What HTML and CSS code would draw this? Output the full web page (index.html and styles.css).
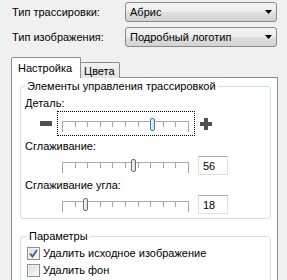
FILE: index.html
```html
<!DOCTYPE html>
<html lang="ru">
<head>
  <meta charset="UTF-8">
  <title>Трассировка</title>
  <link rel="stylesheet" href="styles.css">
</head>
<body>
  <div class="window">
    <div class="field-row">
      <span class="field-label">Тип трассировки:</span>
      <div class="combo">
        <span>Абрис</span>
        <svg class="combo-arrow" width="7" height="4" viewBox="0 0 7 4"><path d="M0 0H7L3.5 4Z" fill="#000"/></svg>
      </div>
    </div>
    <div class="field-row">
      <span class="field-label">Тип изображения:</span>
      <div class="combo">
        <span>Подробный логотип</span>
        <svg class="combo-arrow" width="7" height="4" viewBox="0 0 7 4"><path d="M0 0H7L3.5 4Z" fill="#000"/></svg>
      </div>
    </div>

    <div class="tabs">
      <div class="tab-strip">
        <div class="tab active">Настройка</div>
        <div class="tab">Цвета</div>
      </div>
      <div class="tab-panel">
        <fieldset class="group">
          <legend>Элементы управления трассировкой</legend>
          <div class="ctl-label">Деталь:</div>
          <div class="detail-row">
            <svg class="step" width="12" height="5" viewBox="0 0 12 5"><rect width="12" height="5" fill="#505050"/></svg>
            <div class="focus-box">
              <div class="slider">
                <div class="track"></div>
                <div class="ticks"><i></i><i></i><i></i><i></i><i></i><i></i><i></i><i></i><i></i><i></i><i></i></div>
                <div class="thumb hot" style="left: 88px"></div>
              </div>
            </div>
            <svg class="step" width="12" height="12" viewBox="0 0 12 12"><path d="M4 0H8V4H12V8H8V12H4V8H0V4H4Z" fill="#505050"/></svg>
          </div>

          <div class="ctl-label">Сглаживание:</div>
          <div class="slider-row">
            <div class="slider">
              <div class="track"></div>
              <div class="ticks"><i></i><i></i><i></i><i></i><i></i><i></i><i></i><i></i><i></i><i></i><i></i></div>
              <div class="thumb" style="left: 69px"></div>
            </div>
            <div class="num-box">56</div>
          </div>

          <div class="ctl-label">Сглаживание угла:</div>
          <div class="slider-row">
            <div class="slider">
              <div class="track"></div>
              <div class="ticks"><i></i><i></i><i></i><i></i><i></i><i></i><i></i><i></i><i></i><i></i><i></i></div>
              <div class="thumb" style="left: 21px"></div>
            </div>
            <div class="num-box">18</div>
          </div>
        </fieldset>

        <fieldset class="group params">
          <legend>Параметры</legend>
          <div class="check">
            <span class="box">
              <svg width="9" height="9" viewBox="0 0 9 9"><path d="M1 4.5L3.5 7.5L8 1" fill="none" stroke="#3d5c9c" stroke-width="1.8"/></svg>
            </span>
            Удалить исходное изображение
          </div>
          <div class="check">
            <span class="box"></span>
            Удалить фон
          </div>
        </fieldset>
      </div>
    </div>
  </div>
</body>
</html>
```

FILE: styles.css
```css
* {
  box-sizing: border-box;
}
body {
  margin: 0;
  background: #f0f0f0;
  font-family: 'Liberation Sans', Arial, sans-serif;
  font-size: 11px;
  color: #000;
}
.window {
  width: 287px;
  height: 280px;
  overflow: hidden;
  padding-top: 2px;
}
.field-row {
  display: flex;
  align-items: center;
  height: 20px;
  padding-left: 12px;
}
.field-row + .field-row {
  margin-top: 5px;
}
.field-label {
  width: 113px;
}
.combo {
  width: 152px;
  height: 20px;
  border: 1px solid #8a8a8a;
  border-radius: 3px;
  background: linear-gradient(#f4f4f4 0%, #ececec 50%, #e0e0e0 51%, #d2d2d2 100%);
  display: flex;
  align-items: center;
  justify-content: space-between;
  padding: 0 4px 0 4px;
}
.tabs {
  margin: 11px 0 0 11px;
  width: 267px;
}
.tab-strip {
  display: flex;
  align-items: flex-end;
  height: 20px;
  margin-bottom: -1px;
}
.tab {
  height: 16px;
  width: 40px;
  margin-left: -1px;
  padding: 2px 0 0 3px;
  border: 1px solid #898c95;
  border-bottom: none;
  border-radius: 2px 2px 0 0;
  background: linear-gradient(#f3f3f3, #e3e3e3);
}
.tab.active {
  height: 21px;
  width: 70px;
  margin-left: 0;
  padding: 4px 0 0 6px;
  background: #fff;
  position: relative;
  z-index: 1;
}
.tab-panel {
  border: 1px solid #898c95;
  background: #fff;
  height: 210px;
  padding: 1px 6px 0 8px;
}
.group {
  margin: 0;
  border: 1px solid #d5dfe5;
  border-radius: 3px;
  padding: 0 4px 4px 4px;
}
.group legend {
  padding: 0 2px;
  line-height: 14px;
}
.ctl-label {
  line-height: 14px;
  margin-top: 3px;
}
.detail-row {
  display: flex;
  align-items: center;
  margin-top: 1px;
}
.detail-row .step:first-child {
  margin-left: 15px;
}
.focus-box {
  margin: 0 5px;
  border: 1px dotted #000;
  padding: 6px 5px 3px 4px;
}
.slider-row {
  display: flex;
  align-items: center;
  margin: 3px 0 0 37px;
}
.slider {
  position: relative;
  width: 127px;
  height: 14px;
  padding-top: 3px;
}
.track {
  height: 1px;
  background: #a9a9a9;
}
.ticks {
  display: flex;
  justify-content: space-between;
  align-items: flex-start;
}
.ticks i {
  width: 1px;
  height: 5px;
  background: #a5a5a5;
}
.ticks i:first-child,
.ticks i:last-child {
  height: 10px;
}
.thumb {
  position: absolute;
  top: 0;
  width: 5px;
  height: 13px;
  border: 1px solid #707070;
  border-radius: 2px;
  background: linear-gradient(90deg, #f4f4f4, #dcdcdc);
}
.thumb.hot {
  border-color: #3c7fb1;
  background: linear-gradient(90deg, #eaf6fd, #bfe2f7);
}
.num-box {
  width: 30px;
  height: 19px;
  margin-left: 9px;
  border: 1px solid #dbdfe6;
  border-top-color: #abadb3;
  background: #fff;
  padding: 2px 0 0 4px;
  line-height: 14px;
}
.params {
  margin-top: 10px;
  padding: 0 4px 6px 6px;
}
.check {
  display: flex;
  align-items: center;
  gap: 3px;
  line-height: 14px;
  margin-top: 3px;
}
.box {
  width: 13px;
  height: 13px;
  border: 1px solid #8e8f8f;
  background: linear-gradient(135deg, #dcdcdc, #f8f8f8);
  box-shadow: inset 0 0 0 1px #f4f4f4;
  display: flex;
  align-items: center;
  justify-content: center;
}
```
